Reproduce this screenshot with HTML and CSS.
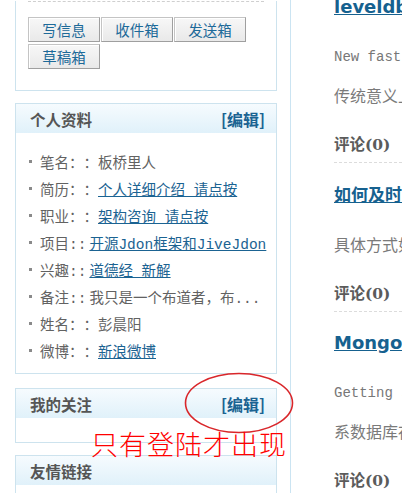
FILE: index.html
```html
<!DOCTYPE html>
<html lang="zh-CN">
<head>
<meta charset="utf-8">
<title>Jdon</title>
<link rel="stylesheet" href="styles.css">
</head>
<body>
<div class="page">
  <aside class="sidebar">
    <section class="box box-msg">
      <div class="dash"></div>
      <div class="btns">
        <button class="btn">写信息</button><button class="btn">收件箱</button><button class="btn">发送箱</button><button class="btn">草稿箱</button>
      </div>
    </section>

    <section class="box box-profile">
      <header class="box-head"><span class="box-title">个人资料</span><a class="edit" href="#">[编辑]</a></header>
      <ul class="info">
        <li><span class="lbl">笔名：：板桥里人</span></li>
        <li><span class="lbl">简历：：</span><a href="#">个人详细介绍&nbsp;请点按</a></li>
        <li><span class="lbl">职业：：</span><a href="#">架构咨询&nbsp;请点按</a></li>
        <li><span class="lbl">项目::</span><a class="tight" href="#">开源Jdon框架和JiveJdon</a></li>
        <li><span class="lbl">兴趣::</span><a class="tight" href="#">道德经&nbsp;新解</a></li>
        <li><span class="lbl">备注::</span><span class="lbl tight">我只是一个布道者，布...</span></li>
        <li><span class="lbl">姓名：：彭晨阳</span></li>
        <li><span class="lbl">微博：：</span><a href="#">新浪微博</a></li>
      </ul>
    </section>

    <section class="box box-follow">
      <header class="box-head"><span class="box-title">我的关注</span><a class="edit" href="#">[编辑]</a></header>
      <div class="box-body"></div>
    </section>

    <section class="box box-links">
      <header class="box-head"><span class="box-title">友情链接</span></header>
    </section>
  </aside>

  <main class="main">
    <article class="post first">
      <h2 class="post-title"><a href="#">leveldb与LSM数据库</a></h2>
      <p class="desc mono">New fast key-value store</p>
      <p class="desc next">传统意义上的数据库</p>
      <div class="comments">评论(0)</div>
    </article>
    <article class="post">
      <h2 class="post-title cjk"><a href="#">如何及时处理</a></h2>
      <p class="desc">具体方式如下</p>
      <div class="comments">评论(0)</div>
    </article>
    <article class="post">
      <h2 class="post-title"><a href="#">MongoDB</a></h2>
      <p class="desc mono">Getting started</p>
      <p class="desc next">系数据库存储</p>
      <div class="comments">评论(0)</div>
    </article>
  </main>

  <svg class="note-ring" width="112" height="64" viewBox="0 0 112 64" aria-hidden="true">
    <ellipse cx="56" cy="31" rx="53.5" ry="29.5" fill="none" stroke="#d9262a" stroke-width="1.6"/>
  </svg>
  <div class="note-text">只有登陆才出现</div>
</div>
</body>
</html>
```

FILE: styles.css
```css
html, body {
  margin: 0;
  padding: 0;
  background: #fff;
  overflow: hidden;
}

body {
  font-family: "Noto Sans CJK SC", sans-serif;
  color: #555;
  text-spacing-trim: space-all;
}

.page {
  position: relative;
  display: flex;
  align-items: flex-start;
  height: 493px;
}

.sidebar {
  width: 262px;
  margin-left: 15px;
  flex: none;
}

.box {
  border: 1px solid #cde3ee;
  background: #fff;
}

.box-msg {
  border-top: none;
  padding: 0 12px;
  box-sizing: border-box;
  height: 90px;
}

.dash {
  margin-top: 1px;
  border-top: 1px dashed #cfcfcf;
}

.btns {
  display: flex;
  flex-wrap: wrap;
  column-gap: 1px;
  row-gap: 2px;
  margin-top: 15px;
  width: 225px;
}

.btn {
  width: 72px;
  height: 25px;
  padding: 0;
  margin: 0;
  font-family: "Noto Sans CJK SC", sans-serif;
  font-size: 14.5px;
  line-height: 21px;
  color: #1d6a99;
  background: linear-gradient(#f7f7f7, #e9e9e9);
  border: 1px solid #c4c4c4;
  border-right-color: #9f9f9f;
  border-bottom-color: #9f9f9f;
  box-shadow: inset 1px 1px 0 #fff;
}

.box-profile {
  margin-top: 12px;
}

.box-head {
  display: flex;
  justify-content: space-between;
  align-items: center;
  height: 29px;
  padding: 0 11px 0 14px;
  background: linear-gradient(#f6fbfe, #e0f1fa);
}

.box-title {
  font-size: 15.5px;
  font-weight: bold;
  color: #555;
}

.edit {
  font-size: 16px;
  font-weight: bold;
  color: #1b6392;
  text-decoration: none;
}

.info {
  list-style: none;
  margin: 0;
  padding: 15px 0 9px 13px;
}

.info li {
  display: flex;
  align-items: center;
  height: 27px;
  font-family: "Liberation Mono", "Noto Sans CJK JP", "Noto Sans CJK SC", monospace;
  font-size: 14.5px;
  white-space: nowrap;
}

.info li::before {
  content: "";
  width: 3px;
  height: 3px;
  background: #8a8a8a;
  margin-right: 8px;
  flex: none;
}

.lbl {
  color: #626262;
  white-space: pre;
}

.tight {
  margin-left: 3px;
}

.info a {
  color: #1b6392;
  text-decoration: underline;
}

.box-follow {
  margin-top: 14px;
}

.box-body {
  height: 24px;
}

.box-links {
  margin-top: 12px;
  height: 60px;
}

.main {
  flex: 1;
  min-width: 0;
  height: 493px;
  margin-left: 13px;
  border-left: 1px solid #cbe4f2;
  padding-left: 43px;
  overflow: hidden;
  white-space: nowrap;
}

.post-title {
  margin: 19px 0 0;
  line-height: 24px;
  font-family: "DejaVu Sans", "Noto Sans CJK SC", sans-serif;
  font-size: 18px;
  font-weight: bold;
}

.post.first .post-title {
  margin-top: -5px;
}

.post-title.cjk {
  font-family: "Noto Sans CJK SC", sans-serif;
  font-size: 17px;
}

.post-title a {
  color: #16618f;
  text-decoration: underline;
}

.desc {
  margin: 26px 0 0;
  line-height: 24px;
  font-size: 16px;
  color: #7a7a7a;
}

.desc.next {
  margin-top: 14px;
}

.desc.mono {
  font-family: "Liberation Mono", monospace;
  font-size: 14px;
  color: #777;
}

.comments {
  margin-top: 26px;
  line-height: 24px;
  font-family: "DejaVu Serif", "Noto Sans CJK SC", serif;
  font-size: 15.5px;
  font-weight: bold;
  color: #5b5b5b;
  padding-bottom: 5px;
  border-bottom: 1px dashed #dcdcdc;
}

.note-ring {
  position: absolute;
  left: 183px;
  top: 372px;
}

.note-text {
  position: absolute;
  left: 91px;
  top: 427px;
  font-family: "Noto Sans CJK SC", sans-serif;
  font-size: 27px;
  line-height: 34px;
  letter-spacing: 1px;
  color: #f00;
  font-weight: 300;
  white-space: nowrap;
}
```
